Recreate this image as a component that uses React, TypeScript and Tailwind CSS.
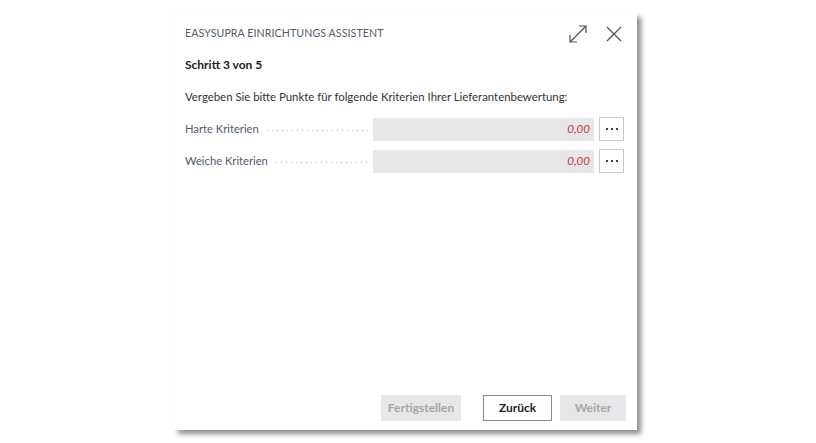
const fields = [
  { label: "Harte Kriterien", value: "0,00" },
  { label: "Weiche Kriterien", value: "0,00" },
];

const ExpandIcon = () => (
  <svg width="20" height="20" viewBox="0 0 20 20" fill="none" stroke="#505050" strokeWidth="1.2">
    <path d="M2 18 L18 2" />
    <path d="M11 2 H18 V9" />
    <path d="M2 11 V18 H9" />
  </svg>
);

const CloseIcon = () => (
  <svg width="18" height="18" viewBox="0 0 18 18" fill="none" stroke="#505050" strokeWidth="1.2">
    <path d="M2 2 L16 16 M16 2 L2 16" />
  </svg>
);

const App = () => {
  return (
    <div className="w-[816px] h-[443px] bg-white font-['Lato',sans-serif] pt-[13px] pl-[174px]">
      {/* DIALOG */}
      <div className="w-[463px] h-[417px] bg-white flex flex-col shadow-[4px_4px_5px_rgba(0,0,0,0.45)]">
        <div className="flex items-center justify-between pl-[11px] pr-[14px] pt-[11px]">
          <div className="text-[10.6px] tracking-[0.1px] text-[#505c6d]">EASYSUPRA EINRICHTUNGS ASSISTENT</div>
          <div className="flex items-center gap-x-[17px]">
            <ExpandIcon />
            <CloseIcon />
          </div>
        </div>

        <div className="pl-[11px] mt-[12px] text-[12px] font-bold text-[#212121]">Schritt 3 von 5</div>

        <div className="pl-[11px] mt-[14px] text-[11.4px] text-[#333]">
          Vergeben Sie bitte Punkte für folgende Kriterien Ihrer Lieferantenbewertung:
        </div>

        <div className="flex flex-col gap-y-[8px] mt-[12px] pl-[11px]">
          {fields.map((f) => (
            <div key={f.label} className="flex items-center">
              <div className="w-[188px] flex items-center text-[11.2px] text-[#505c6d]">
                <span className="whitespace-nowrap">{f.label}</span>
                <span className="flex-1 ml-[6px] mr-[5px] mt-[3px] h-[3px] bg-[radial-gradient(circle,#b8b8b8_0.7px,transparent_0.9px)] bg-[length:5px_3px]" />
              </div>
              <div className="w-[221px] h-[23px] bg-[#e6e7e8] flex items-center justify-end pr-[4px] text-[11.6px] italic text-[#d13438]">
                {f.value}
              </div>
              <button className="ml-[5px] w-[25px] h-[24px] border border-[#c8c8c8] bg-white flex items-center justify-center gap-x-[3px]">
                <span className="w-[2px] h-[2px] bg-[#444]" />
                <span className="w-[2px] h-[2px] bg-[#444]" />
                <span className="w-[2px] h-[2px] bg-[#444]" />
              </button>
            </div>
          ))}
        </div>

        <div className="flex-1" />

        <div className="flex items-center justify-end gap-x-[8px] pr-[11px] pb-[9px]">
          <button className="w-[80px] h-[26px] bg-[#e6e7e8] text-[12px] font-bold text-[#a6a6a6]">Fertigstellen</button>
          <button className="ml-[14px] w-[69px] h-[26px] border border-[#8a8a8a] bg-white text-[12px] font-bold text-[#212121]">Zurück</button>
          <button className="w-[66px] h-[26px] bg-[#e6e7e8] text-[12px] font-bold text-[#a6a6a6]">Weiter</button>
        </div>
      </div>
    </div>
  );
};

export default App;
